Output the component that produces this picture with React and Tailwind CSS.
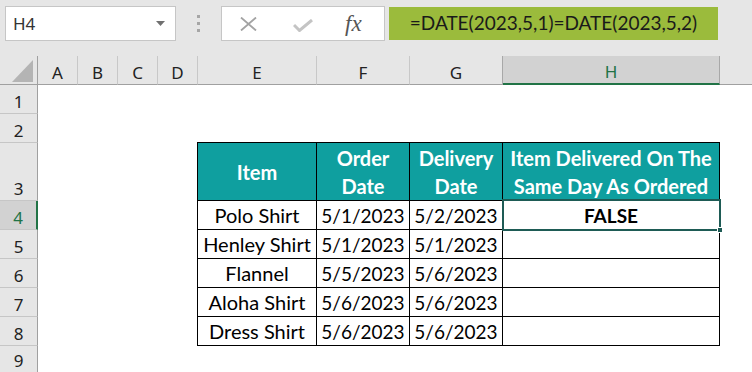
import React from "react";

const cellFont = { fontFamily: "Lato, 'Liberation Sans', sans-serif" };
const uiFont = { fontFamily: "'Noto Sans', 'Open Sans', sans-serif" };

const colHeads = [
  { l: "A", w: "w-[40px]", b: "border-[#c8c8c8]" },
  { l: "B", w: "w-[40px]", b: "border-[#c8c8c8]" },
  { l: "C", w: "w-[40px]", b: "border-[#c8c8c8]" },
  { l: "D", w: "w-[40px]", b: "border-[#c8c8c8]" },
  { l: "E", w: "w-[119px]", b: "border-[#c8c8c8]" },
  { l: "F", w: "w-[93px]", b: "border-[#c8c8c8]" },
  { l: "G", w: "w-[93px]", b: "border-[#a8a8a8]" },
];

const rows = [
  ["Polo Shirt", "5/1/2023", "5/2/2023", "FALSE"],
  ["Henley Shirt", "5/1/2023", "5/1/2023", ""],
  ["Flannel", "5/5/2023", "5/6/2023", ""],
  ["Aloha Shirt", "5/6/2023", "5/6/2023", ""],
  ["Dress Shirt", "5/6/2023", "5/6/2023", ""],
];

function RowHead({ n, h = "h-[29px]", active }) {
  return (
    <div
      className={
        active
          ? `${h} shrink-0 w-[38px] bg-[#d2d2d2] border-b border-b-[#c6c6c6] border-r-2 border-r-[#217346] flex items-end justify-center text-[17px] leading-[22px] text-[#217346]`
          : `${h} shrink-0 w-[38px] bg-[#e6e6e6] border-b border-b-[#c6c6c6] border-r border-r-[#a0a0a0] flex items-end justify-center text-[17px] leading-[22px] text-[#222]`
      }
      style={uiFont}
    >
      {n}
    </div>
  );
}

export default function App() {
  return (
    <div className="w-[752px] h-[372px] overflow-hidden bg-white flex flex-col">
      {/* Top bar */}
      <div className="h-[56px] shrink-0 bg-[#e6e6e6] flex items-start pt-[6px] pl-[5px]">
        <div
          className="w-[171px] h-[35px] bg-white border border-[#c6c6c6] flex items-center justify-between pl-[7px] pr-[10px]"
          style={uiFont}
        >
          <span className="text-[17px] text-[#333] leading-none">H4</span>
          <svg width="9" height="5" viewBox="0 0 9 5">
            <path d="M0 0 H9 L4.5 5 Z" fill="#707070" />
          </svg>
        </div>
        <div className="w-[45px] h-[35px] flex flex-col items-center justify-center gap-[4px]">
          <div className="w-[3px] h-[3px] bg-[#a6a6a6]" />
          <div className="w-[3px] h-[3px] bg-[#a6a6a6]" />
          <div className="w-[3px] h-[3px] bg-[#a6a6a6]" />
        </div>
        <div className="w-[164px] h-[35px] bg-white border border-[#c6c6c6] flex items-center">
          <svg className="ml-[18px]" width="17" height="14" viewBox="0 0 17 14">
            <path d="M1 0.5 L16 13.5 M16 0.5 L1 13.5" stroke="#a3a3a3" strokeWidth="1.8" fill="none" />
          </svg>
          <svg className="ml-[36px] mt-[4px]" width="20" height="13" viewBox="0 0 20 13">
            <path d="M1 6 L6.5 11.5 L19 1" stroke="#c4c4c4" strokeWidth="3" fill="none" />
          </svg>
          <span
            className="ml-[32px] text-[23px] italic text-[#555] leading-none"
            style={{ fontFamily: "'Liberation Serif', 'DejaVu Serif', serif" }}
          >
            fx
          </span>
        </div>
        <div
          className="ml-[4px] mt-px w-[329px] h-[33px] bg-[#9bbb3c] flex items-center justify-center text-[19px] text-[#1a1a1a]"
          style={cellFont}
        >
          =DATE(2023,5,1)=DATE(2023,5,2)
        </div>
      </div>

      {/* Column headers */}
      <div className="h-[29px] shrink-0 flex bg-[#e6e6e6]" style={uiFont}>
        <div className="w-[38px] h-full border-b border-r border-[#a0a0a0] flex items-end justify-end pb-[2px]">
          <svg width="22" height="22" viewBox="0 0 22 22" className="mr-[3px]">
            <path d="M0 22 H21 V0 Z" fill="#b4b4b4" />
          </svg>
        </div>
        {colHeads.map((c) => (
          <div
            key={c.l}
            className={`${c.w} h-full border-r ${c.b} border-b border-b-[#a0a0a0] flex items-end justify-center text-[17px] leading-[22px] text-[#222]`}
          >
            {c.l}
          </div>
        ))}
        <div className="w-[217px] h-full bg-[#d2d2d2] border-r border-r-[#a8a8a8] border-b-2 border-b-[#217346] flex items-end justify-center text-[17px] leading-[22px] text-[#217346]">
          H
        </div>
        <div className="flex-1 h-full border-b border-b-[#a0a0a0]" />
      </div>

      {/* Body */}
      <div className="flex flex-1 min-h-0 overflow-hidden">
        <div className="flex flex-col shrink-0">
          <RowHead n="1" />
          <RowHead n="2" />
          <RowHead n="3" h="h-[58px]" />
          <RowHead n="4" active />
          <RowHead n="5" />
          <RowHead n="6" />
          <RowHead n="7" />
          <RowHead n="8" />
          <div
            className="h-[26px] shrink-0 w-[38px] bg-[#e6e6e6] border-r border-r-[#a0a0a0] flex items-end justify-center text-[17px] leading-[22px] text-[#222]"
            style={uiFont}
          >
            9
          </div>
        </div>
        <div className="flex-1 bg-white pt-[57px] pl-[159px]" style={cellFont}>
          <div className="grid w-fit grid-cols-[118px_92px_92px_216px] grid-rows-[57px_repeat(5,28px)] gap-px bg-black p-px text-[20px] text-black">
            <div className="bg-[#0f9f9f] text-white font-bold flex items-center justify-center leading-[28px]">
              Item
            </div>
            <div className="bg-[#0f9f9f] text-white font-bold flex items-center justify-center text-center leading-[28px]">
              Order<br />Date
            </div>
            <div className="bg-[#0f9f9f] text-white font-bold flex items-center justify-center text-center leading-[28px]">
              Delivery<br />Date
            </div>
            <div className="bg-[#0f9f9f] text-white font-bold flex items-center justify-center text-center leading-[28px] whitespace-nowrap">
              Item Delivered On The<br />Same Day As Ordered
            </div>
            {rows.map((r, i) => (
              <React.Fragment key={i}>
                <div className="bg-white flex items-center justify-center leading-none whitespace-nowrap">{r[0]}</div>
                <div className="bg-white flex items-center justify-center leading-none text-[19px]">{r[1]}</div>
                <div className="bg-white flex items-center justify-center leading-none text-[19px]">{r[2]}</div>
                <div className="bg-white flex items-center justify-center leading-none font-bold text-[19px] relative">
                  {r[3]}
                  {i === 0 && (
                    <>
                      <div className="absolute -left-px -top-[2px] -right-[2px] -bottom-[2px] border-2 border-[#1e5b55] z-10" />
                      <div className="absolute -right-[4px] -bottom-[4px] w-[6px] h-[6px] bg-[#1e5b55] border border-white z-20" />
                    </>
                  )}
                </div>
              </React.Fragment>
            ))}
          </div>
        </div>
      </div>
    </div>
  );
}
